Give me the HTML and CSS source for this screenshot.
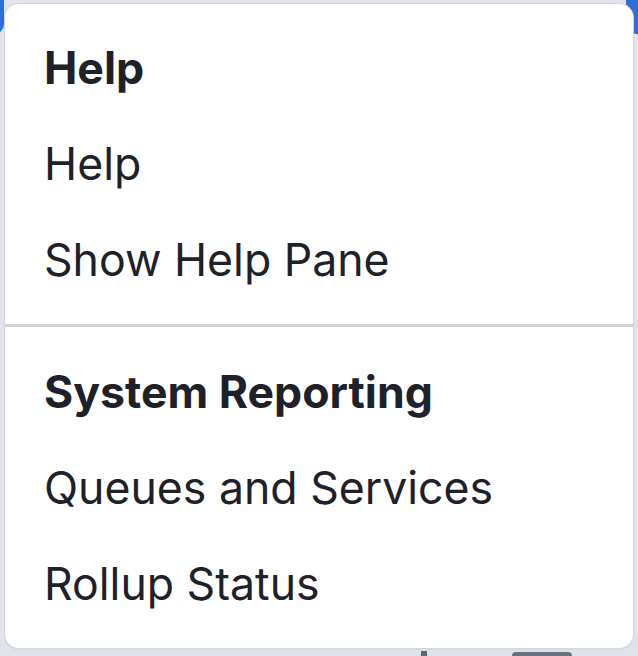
FILE: index.html
```html
<!DOCTYPE html>
<html lang="en">
<head>
<meta charset="utf-8">
<title>Menu</title>
<link rel="stylesheet" href="styles.css">
</head>
<body>
<div class="backdrop">
  <div class="btn-left"></div>
  <div class="btn-right"></div>
  <div class="tick"></div>
  <div class="scroll"></div>
</div>
<nav class="menu">
  <section class="group group-first">
    <div class="heading">Help</div>
    <div class="item">Help</div>
    <div class="item">Show Help Pane</div>
  </section>
  <hr class="divider">
  <section class="group group-last">
    <div class="heading">System Reporting</div>
    <div class="item">Queues and Services</div>
    <div class="item">Rollup Status</div>
  </section>
</nav>
</body>
</html>
```
FILE: styles.css
```css
html, body {
  margin: 0;
  padding: 0;
}
body {
  width: 638px;
  height: 656px;
  overflow: hidden;
  background: #e0e3e9;
  position: relative;
  font-family: "Inter", "Noto Sans", sans-serif;
  color: #1e2129;
  padding: 4px 5px 0 5px;
  box-sizing: border-box;
}
.backdrop {
  position: absolute;
  inset: 0;
}
.btn-left {
  position: absolute;
  left: -20px;
  top: -10px;
  width: 24px;
  height: 44px;
  background: #2e6fd7;
  border-radius: 10px;
}
.btn-right {
  position: absolute;
  left: 626px;
  top: -10px;
  width: 40px;
  height: 44px;
  background: #2e6fd7;
  border-radius: 10px;
}
.tick {
  position: absolute;
  left: 421px;
  top: 651px;
  width: 6px;
  height: 10px;
  background: #5f6573;
}
.scroll {
  position: absolute;
  left: 512px;
  top: 652px;
  width: 60px;
  height: 10px;
  background: #6a707d;
  border-radius: 4px;
}
.menu {
  position: relative;
  width: 628px;
  height: 644px;
  background: #ffffff;
  border-radius: 14px;
  box-shadow: 0 0 0 1px #d3d6dd, 0 1px 3px rgba(40, 50, 70, 0.08);
  box-sizing: border-box;
  display: flex;
  flex-direction: column;
}
.group {
  display: flex;
  flex-direction: column;
}
.group-first {
  padding: 16px 0 16px;
}
.group-last {
  padding: 17px 0 16px;
}
.heading, .item {
  height: 96px;
  line-height: 96px;
  font-size: 44.6px;
  padding-left: 39px;
  white-space: nowrap;
}
.heading {
  font-weight: 700;
}
.item {
  font-weight: 400;
}
.divider {
  margin: 0;
  border: 0;
  height: 3px;
  background: #d2d2d2;
}
```
